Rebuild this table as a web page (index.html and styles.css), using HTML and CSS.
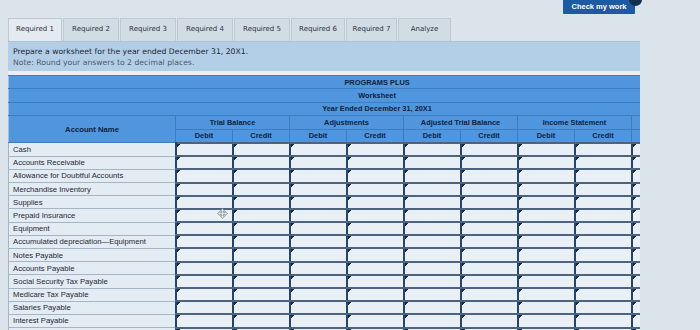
FILE: index.html
```html
<!DOCTYPE html>
<html>
<head>
<meta charset="utf-8">
<link rel="stylesheet" href="styles.css">
</head>
<body>
<div class="page">
  <div class="topbar">
    <button class="check">Check my work<span class="badge"></span></button>
  </div>
  <div class="tabs">
    <div class="tab active w1">Required 1</div>
    <div class="tab w2">Required 2</div>
    <div class="tab w2">Required 3</div>
    <div class="tab w2">Required 4</div>
    <div class="tab w2">Required 5</div>
    <div class="tab w1">Required 6</div>
    <div class="tab w3">Required 7</div>
    <div class="tab w4">Analyze</div>
  </div>
  <div class="instr">
    <p class="l1">Prepare a worksheet for the year ended December 31, 20X1.</p>
    <p class="l2">Note: Round your answers to 2 decimal places.</p>
  </div>
  <div class="tablewrap">
    <table class="ws">
      <colgroup>
        <col class="c-acct">
        <col class="c-num"><col class="c-num"><col class="c-num"><col class="c-num"><col class="c-num">
        <col class="c-num"><col class="c-num"><col class="c-num"><col class="c-num"><col class="c-num">
      </colgroup>
      <thead>
        <tr><th colspan="11" class="title">PROGRAMS PLUS</th></tr>
        <tr><th colspan="11" class="title">Worksheet</th></tr>
        <tr><th colspan="11" class="title">Year Ended December 31, 20X1</th></tr>
        <tr>
          <th rowspan="2" class="acct-h">Account Name</th>
          <th colspan="2">Trial Balance</th>
          <th colspan="2">Adjustments</th>
          <th colspan="2">Adjusted Trial Balance</th>
          <th colspan="2">Income Statement</th>
          <th colspan="2"></th>
        </tr>
        <tr>
          <th>Debit</th><th>Credit</th><th>Debit</th><th>Credit</th><th>Debit</th>
          <th>Credit</th><th>Debit</th><th>Credit</th><th></th><th></th>
        </tr>
      </thead>
      <tbody>
        <tr><td class="acct">Cash</td><td class="in"></td><td class="in"></td><td class="in"></td><td class="in"></td><td class="in"></td><td class="in"></td><td class="in"></td><td class="in"></td><td class="in"></td><td class="in"></td></tr>
        <tr><td class="acct">Accounts Receivable</td><td class="in"></td><td class="in"></td><td class="in"></td><td class="in"></td><td class="in"></td><td class="in"></td><td class="in"></td><td class="in"></td><td class="in"></td><td class="in"></td></tr>
        <tr><td class="acct">Allowance for Doubtful Accounts</td><td class="in"></td><td class="in"></td><td class="in"></td><td class="in"></td><td class="in"></td><td class="in"></td><td class="in"></td><td class="in"></td><td class="in"></td><td class="in"></td></tr>
        <tr><td class="acct">Merchandise Inventory</td><td class="in"></td><td class="in"></td><td class="in"></td><td class="in"></td><td class="in"></td><td class="in"></td><td class="in"></td><td class="in"></td><td class="in"></td><td class="in"></td></tr>
        <tr><td class="acct">Supplies</td><td class="in"></td><td class="in"></td><td class="in"></td><td class="in"></td><td class="in"></td><td class="in"></td><td class="in"></td><td class="in"></td><td class="in"></td><td class="in"></td></tr>
        <tr><td class="acct">Prepaid Insurance</td><td class="in"></td><td class="in"></td><td class="in"></td><td class="in"></td><td class="in"></td><td class="in"></td><td class="in"></td><td class="in"></td><td class="in"></td><td class="in"></td></tr>
        <tr><td class="acct">Equipment</td><td class="in"></td><td class="in"></td><td class="in"></td><td class="in"></td><td class="in"></td><td class="in"></td><td class="in"></td><td class="in"></td><td class="in"></td><td class="in"></td></tr>
        <tr><td class="acct">Accumulated depreciation—Equipment</td><td class="in"></td><td class="in"></td><td class="in"></td><td class="in"></td><td class="in"></td><td class="in"></td><td class="in"></td><td class="in"></td><td class="in"></td><td class="in"></td></tr>
        <tr><td class="acct">Notes Payable</td><td class="in"></td><td class="in"></td><td class="in"></td><td class="in"></td><td class="in"></td><td class="in"></td><td class="in"></td><td class="in"></td><td class="in"></td><td class="in"></td></tr>
        <tr><td class="acct">Accounts Payable</td><td class="in"></td><td class="in"></td><td class="in"></td><td class="in"></td><td class="in"></td><td class="in"></td><td class="in"></td><td class="in"></td><td class="in"></td><td class="in"></td></tr>
        <tr><td class="acct">Social Security Tax Payable</td><td class="in"></td><td class="in"></td><td class="in"></td><td class="in"></td><td class="in"></td><td class="in"></td><td class="in"></td><td class="in"></td><td class="in"></td><td class="in"></td></tr>
        <tr><td class="acct">Medicare Tax Payable</td><td class="in"></td><td class="in"></td><td class="in"></td><td class="in"></td><td class="in"></td><td class="in"></td><td class="in"></td><td class="in"></td><td class="in"></td><td class="in"></td></tr>
        <tr><td class="acct">Salaries Payable</td><td class="in"></td><td class="in"></td><td class="in"></td><td class="in"></td><td class="in"></td><td class="in"></td><td class="in"></td><td class="in"></td><td class="in"></td><td class="in"></td></tr>
        <tr><td class="acct">Interest Payable</td><td class="in"></td><td class="in"></td><td class="in"></td><td class="in"></td><td class="in"></td><td class="in"></td><td class="in"></td><td class="in"></td><td class="in"></td><td class="in"></td></tr>
        <tr><td class="acct"></td><td class="in"></td><td class="in"></td><td class="in"></td><td class="in"></td><td class="in"></td><td class="in"></td><td class="in"></td><td class="in"></td><td class="in"></td><td class="in"></td></tr>
      </tbody>
    </table>
    <svg class="cursor" width="11" height="11" viewBox="0 0 11 11">
      <path d="M5.5 0.5 L7.5 3 L6.3 3 L6.3 4.7 L8 4.7 L8 3.5 L10.5 5.5 L8 7.5 L8 6.3 L6.3 6.3 L6.3 8 L7.5 8 L5.5 10.5 L3.5 8 L4.7 8 L4.7 6.3 L3 6.3 L3 7.5 L0.5 5.5 L3 3.5 L3 4.7 L4.7 4.7 L4.7 3 L3.5 3 Z" fill="#f4f6f8" stroke="#7d8791" stroke-width="0.8"/>
    </svg>
  </div>
</div>
</body>
</html>
```

FILE: styles.css
```css
html, body {
  margin: 0;
  padding: 0;
}
body {
  background: #dbe4eb;
  font-family: "DejaVu Sans", Verdana, sans-serif;
  overflow: hidden;
}
.page {
  margin-left: 8px;
  width: 632px;
}
.topbar {
  height: 18px;
  display: flex;
  justify-content: flex-end;
  align-items: flex-start;
  padding-right: 5px;
}
.check {
  position: relative;
  width: 72px;
  height: 14px;
  border: none;
  border-radius: 0 0 1px 1px;
  background: #1c5aa3;
  color: #ffffff;
  font-family: "Liberation Sans", Arial, sans-serif;
  font-weight: bold;
  font-size: 7.5px;
  padding: 0;
  line-height: 14px;
}
.badge {
  position: absolute;
  right: -7px;
  top: -6px;
  width: 13px;
  height: 12px;
  border-radius: 50%;
  background: #15304f;
}
.tabs {
  display: flex;
  height: 23px;
}
.tab {
  box-sizing: border-box;
  height: 23px;
  border: 1px solid #bfcad3;
  border-bottom: none;
  margin-right: 1px;
  background: #d2dce4;
  color: #2a3440;
  font-size: 7px;
  display: flex;
  align-items: center;
  justify-content: center;
  padding-bottom: 2px;
}
.tab.active {
  background: #e4eaef;
}
.w1 { width: 54px; }
.w2 { width: 56px; }
.w3 { width: 51px; }
.w4 { width: 53px; }
.instr {
  background: #b3cfe7;
  height: 30px;
  box-sizing: border-box;
  padding: 4px 0 0 5px;
  border-top: 1px solid #a9c3da;
}
.instr p {
  margin: 0;
  font-size: 7.7px;
  line-height: 11px;
}
.l1 { color: #1b2530; }
.l2 { color: #4d5a68; }
.tablewrap {
  position: relative;
  overflow: hidden;
  width: 632px;
  border-top: 4px solid #e9eff4;
}
.ws {
  border-collapse: collapse;
  table-layout: fixed;
  width: 737px;
  font-family: "Liberation Sans", Arial, sans-serif;
}
.c-acct { width: 167px; }
.c-num { width: 57px; }
.ws th {
  background: #4f96de;
  color: #0f2340;
  font-weight: bold;
  font-size: 7.4px;
  height: 12.4px;
  padding: 0;
  border: 1px solid #3d7dc2;
  text-align: center;
  white-space: nowrap;
  overflow: hidden;
}
.ws th.title {
  border-left-color: #9dbfe0;
}
.ws th.acct-h {
  font-size: 7.7px;
  border-left-color: #9dbfe0;
}
.ws td {
  height: 11.2px;
  padding: 0;
}
.ws td.acct {
  background: #e3ebf3;
  border: 1px solid #a3b5c7;
  color: #1e2935;
  font-size: 7.7px;
  padding-left: 4px;
  white-space: nowrap;
  overflow: hidden;
}
.ws td.in {
  background-color: #e8eff5;
  background-image: linear-gradient(135deg, #172c4a 2.2px, transparent 2.2px);
  background-repeat: no-repeat;
  background-size: 4px 4px;
  border-top: 2px solid #4d6480;
  border-bottom: 2px solid #4d6480;
  border-left: 2px solid #29446a;
}
.cursor {
  position: absolute;
  left: 209px;
  top: 133px;
}
```
